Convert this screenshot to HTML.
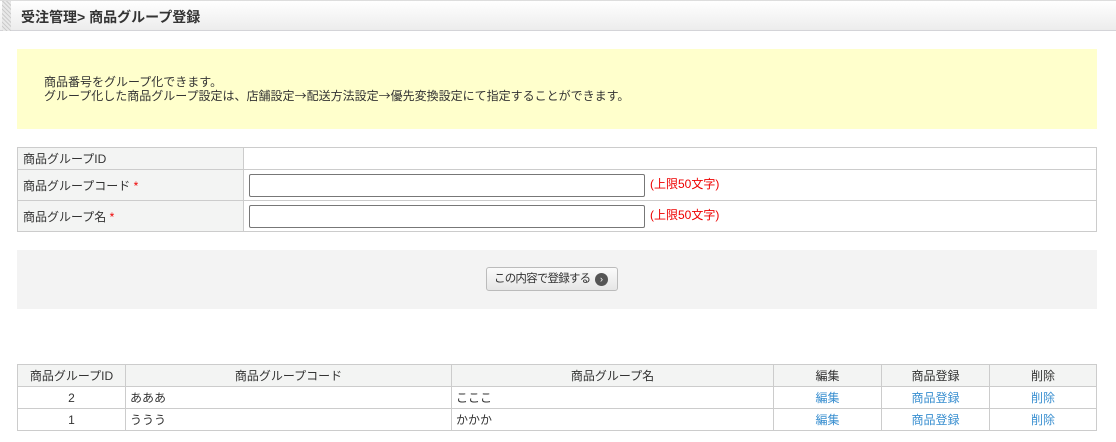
<!DOCTYPE html>
<html><head><meta charset="utf-8"><style>
*{box-sizing:border-box;margin:0;padding:0}
body{width:1116px;height:442px;background:#fff;font-family:"Liberation Sans","Noto Sans CJK JP",sans-serif;font-size:12px;color:#333;position:relative;overflow:hidden}
.hdr{position:absolute;left:0;top:0;width:1116px;height:31px;background:linear-gradient(#fff,#ececec);border-bottom:1px solid #d4d4d8;border-top:1px solid #ddd}
.hdr .st{position:absolute;left:2px;top:0;width:9px;height:30px;background:repeating-linear-gradient(45deg,#ccc 0 1px,#e8e8e8 1px 3px)}
.hdr .t{position:absolute;left:21px;top:6px;font-size:14px;font-weight:bold;color:#333}
.note{position:absolute;left:17px;top:49px;width:1080px;height:80px;background:#ffffcc;padding:26px 0 0 27px;line-height:14px;font-size:12px}
.ar{font-family:"Noto Sans CJK JP",sans-serif}
table{border-collapse:collapse;position:absolute;left:17px;width:1080px}
td,th{border:1px solid #ccc;font-weight:normal;font-size:12px}
.f td{padding:0 5px}
.f td.l{background:#f3f4f3;width:226px}
.f input{width:396px;height:23px;border:1px solid #777;border-radius:2px;vertical-align:middle}
.r{color:#e00;margin-left:5px}
.req{color:#e00}
.box{position:absolute;left:17px;top:250px;width:1080px;height:59px;background:#f3f3f3}
.btn{position:absolute;left:469px;top:17px;width:132px;height:24px;border:1px solid #bbb;border-radius:3px;background:linear-gradient(#fafafa,#e6e6e6);font-size:11.5px;line-height:22px;padding-left:7px;color:#333;white-space:nowrap;letter-spacing:-0.8px}
.btn i{position:absolute;left:108px;top:5px;width:13px;height:13px;border-radius:50%;background:#555;color:#fff;font-style:normal;font-size:9px;line-height:13px;text-align:center;letter-spacing:0}
.g th{background:#f3f4f3;height:22px;text-align:center}
.g td{height:22px;padding:0 4px}
.c{text-align:center}
a{color:#3a8fd0;text-decoration:none}
</style></head><body>
<div class="hdr"><div class="st"></div><div class="t">受注管理&gt; 商品グループ登録</div></div>
<div class="note">商品番号をグループ化できます。<br>グループ化した商品グループ設定は、店舗設定<span class="ar">→</span>配送方法設定<span class="ar">→</span>優先変換設定にて指定することができます。</div>
<table class="f" style="top:147px">
<tr style="height:22px"><td class="l">商品グループID</td><td></td></tr>
<tr style="height:31px"><td class="l">商品グループコード <span class="req">*</span></td><td><input><span class="r">(上限50文字)</span></td></tr>
<tr style="height:31px"><td class="l">商品グループ名 <span class="req">*</span></td><td><input><span class="r">(上限50文字)</span></td></tr>
</table>
<div class="box"><div class="btn">この内容で登録する<i>›</i></div></div>
<table class="g" style="top:364px">
<tr><th style="width:108px">商品グループID</th><th style="width:326px">商品グループコード</th><th style="width:322px">商品グループ名</th><th style="width:108px">編集</th><th style="width:108px">商品登録</th><th>削除</th></tr>
<tr><td class="c">2</td><td>あああ</td><td>こここ</td><td class="c"><a>編集</a></td><td class="c"><a>商品登録</a></td><td class="c"><a>削除</a></td></tr>
<tr><td class="c">1</td><td>ううう</td><td>かかか</td><td class="c"><a>編集</a></td><td class="c"><a>商品登録</a></td><td class="c"><a>削除</a></td></tr>
</table>
</body></html>
